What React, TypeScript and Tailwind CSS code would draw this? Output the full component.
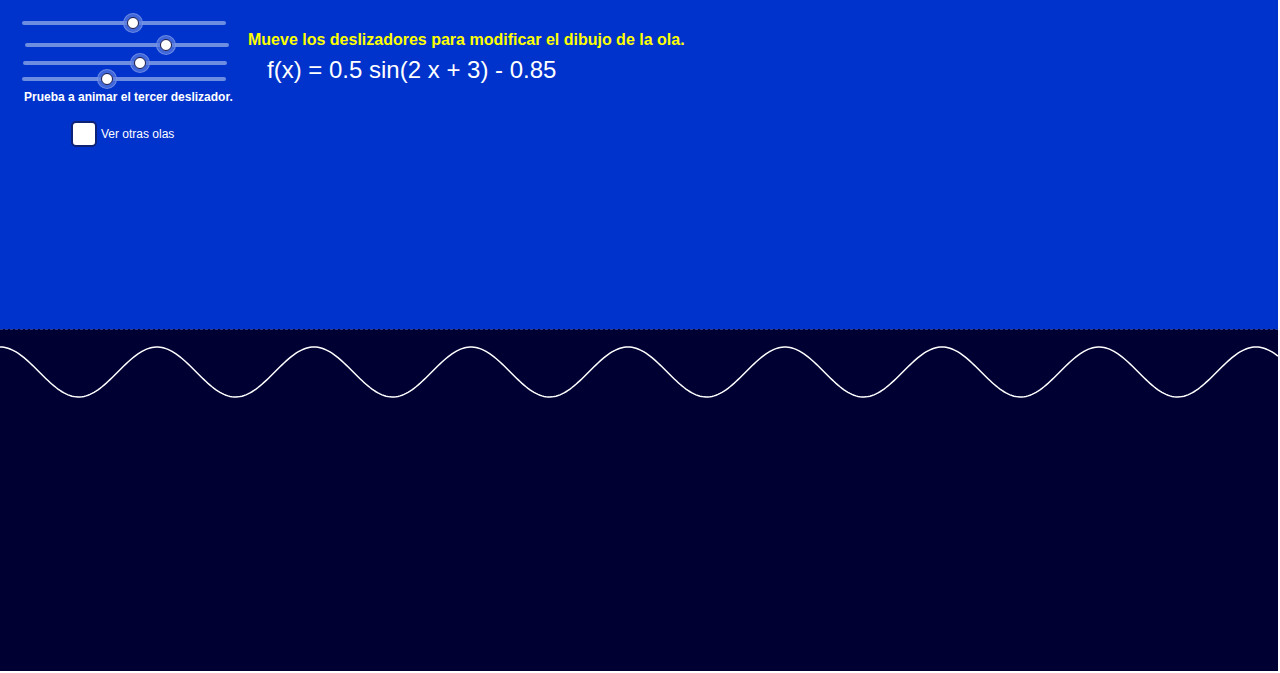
import React from 'react';

const sliders = [
  { ml: 'ml-0', mt: 'mt-[21px]', knob: 111 },
  { ml: 'ml-[3px]', mt: 'mt-[18px]', knob: 141 },
  { ml: 'ml-[1px]', mt: 'mt-[14px]', knob: 117 },
  { ml: 'ml-0', mt: 'mt-[12px]', knob: 85 },
];

const Slider: React.FC<{ ml: string; mt: string; knob: number }> = ({ ml, mt, knob }) => (
  <div className={`relative w-[204px] h-[4px] rounded-full bg-[#6d8de0] ${ml} ${mt}`}>
    <div
      className="absolute top-1/2 w-[20px] h-[20px] -translate-x-1/2 -translate-y-1/2 rounded-full bg-[#5a7ce0]/70 border border-[#8aa2ea]/60 flex items-center justify-center"
      style={{ left: knob }}
    >
      <div className="w-[12px] h-[12px] rounded-full bg-white border border-[#1a1a4a]" />
    </div>
  </div>
);

// wave: f(x) = 0.5 sin(2x + 3) - 0.85, 50px per unit
const wavePath = (() => {
  const pts: string[] = [];
  for (let x = 0; x <= 1278; x += 2) {
    const y = 42 - 25 * Math.cos((2 * Math.PI * (x - 157)) / 157);
    pts.push(`${x === 0 ? 'M' : 'L'}${x},${y.toFixed(2)}`);
  }
  return pts.join(' ');
})();

export default function App() {
  return (
    <div className="w-[1278px] h-[671px] flex flex-col font-['Liberation_Sans',Arial,sans-serif] select-none">
      <div className="h-[329px] bg-[#0033cc] flex">
        <div className="w-[226px] pl-[22px] flex flex-col">
          {sliders.map((s, i) => (
            <Slider key={i} {...s} />
          ))}
          <div className="mt-[9px] ml-[2px] text-[12px] leading-[14px] font-bold text-white whitespace-nowrap">
            Prueba a animar el tercer deslizador.
          </div>
          <div className="mt-[17px] ml-[49px] flex items-center">
            <div className="w-[26px] h-[26px] rounded-[5px] bg-white border-2 border-[#0d2275]" />
            <span className="ml-[4px] text-[12px] text-white">Ver otras olas</span>
          </div>
        </div>
        <div className="flex flex-col pl-[22px]">
          <div className="mt-[31px] text-[16px] leading-[18px] font-bold text-[#ffff00] whitespace-nowrap">
            Mueve los deslizadores para modificar el dibujo de la ola.
          </div>
          <div className="mt-[7px] ml-[19px] text-[24px] leading-[27px] text-white whitespace-nowrap">
            f(x) = 0.5 sin(2 x + 3) - 0.85
          </div>
        </div>
      </div>
      <div className="flex-1 bg-[#000033] border-t border-dashed border-[#2a3a8a]">
        <svg width="1278" height="341" viewBox="0 0 1278 341" className="block">
          <path d={wavePath} fill="none" stroke="#ffffff" strokeWidth="1.5" />
        </svg>
      </div>
    </div>
  );
}
